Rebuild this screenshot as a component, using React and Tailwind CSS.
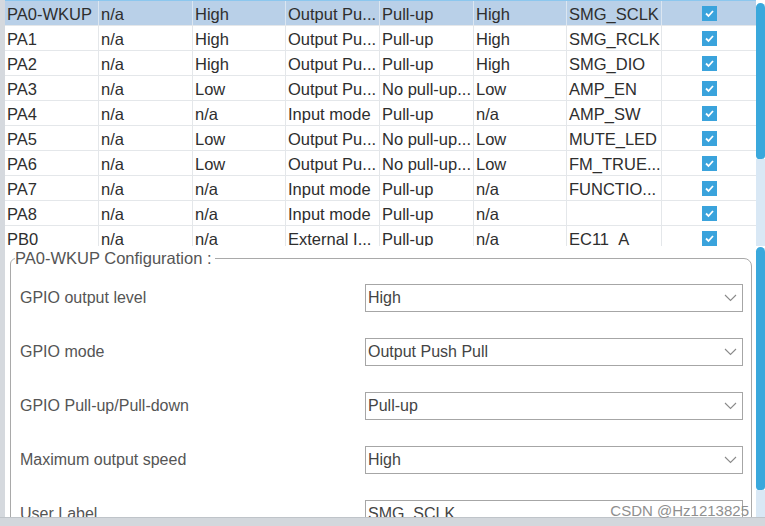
import React from "react";

const rows = [
  ["PA0-WKUP", "n/a", "High", "Output Pu...", "Pull-up", "High", "SMG_SCLK"],
  ["PA1", "n/a", "High", "Output Pu...", "Pull-up", "High", "SMG_RCLK"],
  ["PA2", "n/a", "High", "Output Pu...", "Pull-up", "High", "SMG_DIO"],
  ["PA3", "n/a", "Low", "Output Pu...", "No pull-up...", "Low", "AMP_EN"],
  ["PA4", "n/a", "n/a", "Input mode", "Pull-up", "n/a", "AMP_SW"],
  ["PA5", "n/a", "Low", "Output Pu...", "No pull-up...", "Low", "MUTE_LED"],
  ["PA6", "n/a", "Low", "Output Pu...", "No pull-up...", "Low", "FM_TRUE..."],
  ["PA7", "n/a", "n/a", "Input mode", "Pull-up", "n/a", "FUNCTIO..."],
  ["PA8", "n/a", "n/a", "Input mode", "Pull-up", "n/a", ""],
  ["PB0", "n/a", "n/a", "External I...", "Pull-up", "n/a", "EC11_A"],
];

const fields = [
  ["GPIO output level", "High"],
  ["GPIO mode", "Output Push Pull"],
  ["GPIO Pull-up/Pull-down", "Pull-up"],
  ["Maximum output speed", "High"],
];

function Check() {
  return (
    <span className="w-[15px] h-[15px] bg-[#3aa3dc] flex items-center justify-center">
      <svg width="11" height="11" viewBox="0 0 11 11">
        <polyline points="2,5.5 4.5,8 9,3" fill="none" stroke="white" strokeWidth="1.8" />
      </svg>
    </span>
  );
}

function Chevron() {
  return (
    <svg width="13" height="8" viewBox="0 0 13 8" className="mr-[5px]">
      <polyline points="1,1 6.5,6.5 12,1" fill="none" stroke="#8a8a8a" strokeWidth="1.1" />
    </svg>
  );
}

export default function App() {
  return (
    <div
      className="w-[765px] h-[526px] overflow-hidden bg-white flex flex-col relative"
      style={{ fontFamily: '"Liberation Sans", Arial, sans-serif' }}
    >
      <div className="flex flex-1 min-h-0">
        <div className="w-[5px] bg-[#d5d9de] shrink-0" />
        <div className="flex-1 flex flex-col min-w-0">
          {/* pin table */}
          <div className="h-[246px] flex shrink-0">
            <div className="w-[751px] overflow-hidden">
              <div className="h-[1px] bg-[#8cc7ee]" />
              {rows.map((r, i) => (
                <div
                  key={i}
                  className={
                    "grid grid-cols-[94px_94px_93px_94px_94px_93px_95px_94px] h-[25px] border-b border-[#e4e7ea] text-[16.5px] text-[#2e2e2e] " +
                    (i === 0 ? "bg-[#b9d0e8]" : "bg-white")
                  }
                >
                  {r.map((c, j) => (
                    <div
                      key={j}
                      className={
                        "pl-[2px] leading-[26px] whitespace-nowrap overflow-hidden border-r " +
                        (i === 0 ? "border-[#dbe6f1]" : "border-[#e4e7ea]")
                      }
                    >
                      {c}
                    </div>
                  ))}
                  <div className="flex items-center justify-center">
                    <Check />
                  </div>
                </div>
              ))}
            </div>
            <div className="w-[9px] flex flex-col">
              <div className="h-[156px] mt-[3px] bg-[#3aa8dc] rounded-t-[5px] rounded-b-[4px]" />
              <div className="flex-1 bg-[#d9e8f5]" />
            </div>
          </div>

          {/* configuration panel */}
          <div className="flex-1 flex min-h-0">
            <div className="flex-1 overflow-hidden pl-[5px] pr-[4px] pt-[3px]">
              <fieldset className="border border-[#a9a9a9] rounded-tl-[6px] rounded-tr-[8px] pb-[20px] px-0">
                <legend className="ml-[4px] text-[16.5px] text-[#555] leading-[18px] pr-[3px]">
                  PA0-WKUP Configuration :
                </legend>
                <div className="flex flex-col gap-[26px] pt-[17px] pl-[9px] pr-[8px]">
                  {fields.map(([label, value]) => (
                    <div key={label} className="flex items-center h-[28px]">
                      <div className="w-[345px] text-[16px] text-[#555]">{label}</div>
                      <div className="flex-1 h-[28px] border border-[#a6a6a6] flex items-center justify-between pl-[2px]">
                        <span className="text-[16px] text-[#444]">{value}</span>
                        <Chevron />
                      </div>
                    </div>
                  ))}
                  <div className="flex items-center h-[28px]">
                    <div className="w-[345px] text-[16px] text-[#555]">User Label</div>
                    <div className="flex-1 h-[28px] border border-[#a6a6a6] flex items-center pl-[2px]">
                      <span className="text-[16px] text-[#444]">SMG_SCLK</span>
                    </div>
                  </div>
                </div>
              </fieldset>
            </div>
            <div className="w-[9px] flex flex-col">
              <div className="h-[243px] mt-[1px] bg-[#3aa8dc] rounded-t-[5px] rounded-b-[4px]" />
              <div className="flex-1 bg-[#d9e8f5]" />
            </div>
          </div>
        </div>
      </div>
      <div className="h-[9px] bg-[#d3d7dc] border-t border-[#bfc4c9] shrink-0" />
      <div className="absolute right-[16px] bottom-[6px] text-[15px] text-[#8f8f8f] leading-[18px]">
        CSDN @Hz1213825
      </div>
    </div>
  );
}
